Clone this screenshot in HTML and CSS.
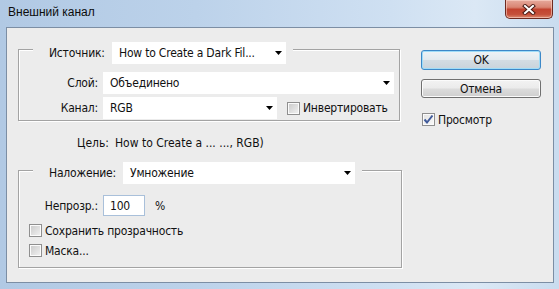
FILE: index.html
```html
<!DOCTYPE html>
<html lang="ru">
<head>
  <meta charset="UTF-8">
  <title>Внешний канал</title>
  <link rel="stylesheet" href="styles.css">
</head>
<body>
<div class="window">
  <div class="titlebar">
    <span class="title">Внешний канал</span>
    <button class="close" type="button">
      <svg width="14" height="11" viewBox="0 0 14 11">
        <path d="M3 2 L11 9 M11 2 L3 9" stroke="#4a1a14" stroke-width="4" stroke-linecap="square" fill="none"/>
        <path d="M3 2 L11 9 M11 2 L3 9" stroke="#ffffff" stroke-width="2" stroke-linecap="square" fill="none"/>
      </svg>
    </button>
  </div>

  <div class="client">
    <div class="main">
      <div class="group group-source">
        <div class="group-head">
          <span class="head-label">Источник:</span>
          <div class="combo combo-source"><span>How to Create a Dark Fil...</span></div>
        </div>
        <div class="row row-layer">
          <span class="label-col">Слой:</span>
          <div class="combo combo-layer"><span>Объединено</span></div>
        </div>
        <div class="row row-channel">
          <span class="label-col">Канал:</span>
          <div class="combo combo-channel"><span>RGB</span></div>
          <label class="check check-invert"><span class="box"></span>Инвертировать</label>
        </div>
      </div>

      <div class="target">
        <span class="target-label">Цель:</span>
        <span>How to Create a ... ..., RGB)</span>
      </div>

      <div class="group group-blend">
        <div class="group-head">
          <span class="head-label head-label-blend">Наложение:</span>
          <div class="combo combo-blend"><span>Умножение</span></div>
        </div>
        <div class="row row-opacity">
          <span class="label-col">Непрозр.:</span>
          <div class="field">100</div>
          <span class="unit">%</span>
        </div>
        <label class="check check-keep"><span class="box"></span>Сохранить прозрачность</label>
        <label class="check check-mask"><span class="box"></span>Маска...</label>
      </div>
    </div>

    <div class="side">
      <button class="btn btn-default" type="button">OK</button>
      <button class="btn btn-cancel" type="button">Отмена</button>
      <label class="check check-preview">
        <span class="box checked">
          <svg width="11" height="11" viewBox="0 0 11 11"><path d="M1.5 5.5 L4 8.5 L9.5 1.5" stroke="#3f5a9a" stroke-width="2" fill="none"/></svg>
        </span>Просмотр
      </label>
    </div>
  </div>
</div>
</body>
</html>
```

FILE: styles.css
```css
*, *::before, *::after {
  box-sizing: border-box;
  margin: 0;
  padding: 0;
}

body {
  width: 559px;
  height: 289px;
  overflow: hidden;
  font-family: "DejaVu Sans Condensed", "DejaVu Sans", sans-serif;
  font-size: 12px;
  letter-spacing: -0.2px;
  color: #111;
  background: #fff;
}

.window {
  width: 559px;
  height: 289px;
  display: flex;
  flex-direction: column;
  padding: 0 5px 6px 6px;
  background: linear-gradient(90deg, #b1c9e4 0%, #bcd2ea 35%, #cfe0f2 70%, #dbe8f5 85%, #c9dcef 100%);
}

.titlebar {
  height: 27px;
  display: flex;
  align-items: flex-start;
}
.title {
  flex: 1;
  margin: 5px 0 0 2px;
  font-family: "Liberation Sans", Arial, sans-serif;
  font-size: 12px;
  letter-spacing: 0;
  color: #0c0c0c;
}
.close {
  width: 48px;
  height: 19px;
  margin-right: 1px;
  border: 1px solid #6e2a20;
  border-top: none;
  border-radius: 0 0 5px 5px;
  display: flex;
  align-items: center;
  justify-content: center;
  background: linear-gradient(#e6a99c 0%, #d98573 40%, #c2432f 52%, #c5503a 80%, #db8a70 100%);
  box-shadow: inset 0 0 0 1px rgba(255, 220, 210, .55);
}

.client {
  flex: 1;
  display: flex;
  background: #ececec;
  border: 1px solid #7c8ea4;
}

.main {
  width: 414px;
  padding-left: 11px;
}

/* etched group boxes */
.group {
  border: 1px solid #a3a3a3;
  box-shadow: inset 1px 1px 0 #fff, 1px 1px 0 #fff;
}
.group-source {
  width: 382px;
  margin-top: 21px;
  padding-bottom: 1px;
}
.group-blend {
  width: 384px;
  margin-top: 20px;
  padding-bottom: 10px;
}
.group-head {
  display: flex;
  align-items: center;
  width: fit-content;
  height: 22px;
  margin: -9px 0 0 14px;
  padding: 0 7px 0 16px;
  background: #ececec;
}
.group-source .group-head {
  margin-top: -8px;
}
.head-label {
  width: 63px;
}
.head-label-blend {
  width: 74px;
}

.row {
  display: flex;
  align-items: center;
  height: 22px;
}
.row-layer { margin-top: 8px; }
.row-channel { margin-top: 3px; }
.row-opacity { margin-top: 11px; height: 21px; }

.label-col {
  width: 79px;
  margin-right: 5px;
  text-align: right;
}

.combo {
  height: 22px;
  display: flex;
  align-items: center;
  padding: 0 4px 0 7px;
  background: #fff;
}
.combo span {
  flex: 1;
  white-space: nowrap;
}
.combo::after {
  content: "";
  width: 7px;
  height: 4px;
  background: #000;
  clip-path: polygon(0 0, 100% 0, 50% 100%);
}
.combo-source { width: 174px; }
.combo-layer { width: 291px; }
.combo-channel { width: 174px; }
.combo-blend { width: 232px; }

.field {
  width: 42px;
  height: 21px;
  padding: 3px 0 0 6px;
  background: #fff;
  border: 1px solid #a9c0da;
}
.unit {
  margin-left: 10px;
}

.target {
  display: flex;
  gap: 6px;
  margin: 15px 0 0 59px;
  line-height: 14px;
  letter-spacing: 0;
}

/* checkboxes */
.check {
  display: flex;
  align-items: center;
  gap: 3px;
  height: 13px;
}
.box {
  width: 13px;
  height: 13px;
  border: 1px solid #8f8f8f;
  background: linear-gradient(135deg, #c9c9c9, #f3f3f3);
  box-shadow: inset 0 0 0 1px #fbfbfb;
  display: flex;
  align-items: center;
  justify-content: center;
}
.box.checked {
  background: linear-gradient(135deg, #e2e2e2, #fafafa);
}
.check-invert { margin-left: 10px; }
.check-keep { margin: 8px 0 0 10px; }
.check-mask { margin: 7px 0 0 10px; }

/* buttons column */
.side {
  display: flex;
  flex-direction: column;
  align-items: flex-start;
  padding-top: 22px;
}
.btn {
  width: 120px;
  height: 20px;
  font-family: inherit;
  font-size: 12px;
  letter-spacing: inherit;
  color: #111;
  border: 1px solid #707070;
  border-radius: 3px;
  background: linear-gradient(#f3f3f3 0%, #ebebeb 48%, #dcdcdc 52%, #cfcfcf 100%);
  box-shadow: inset 0 0 0 1px #fbfbfb;
}
.btn-default {
  border-color: #3c88c8;
  background: linear-gradient(#eef3f6 0%, #e3eaef 48%, #d3dce3 52%, #c9d3db 100%);
  box-shadow: inset 0 0 0 1px #9fdcf8;
}
.btn-cancel {
  margin-top: 9px;
  height: 19px;
}
.check-preview {
  margin: 15px 0 0 1px;
}
```
